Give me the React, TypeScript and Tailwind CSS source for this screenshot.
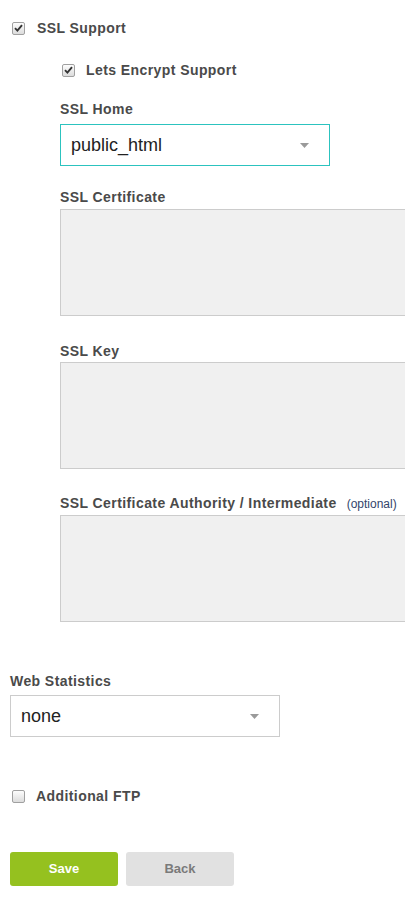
import React from "react";

const Box = ({ checked }: { checked?: boolean }) => (
  <span className="inline-flex h-[13px] w-[13px] shrink-0 items-center justify-center rounded-[2px] border border-[#a0a0a0] bg-gradient-to-b from-[#fdfdfd] to-[#dcdcdc]">
    {checked && (
      <svg width="9" height="8" viewBox="0 0 9 8">
        <path d="M1 4.2 L3.4 6.6 L8 1.2" fill="none" stroke="#333" strokeWidth="1.9" />
      </svg>
    )}
  </span>
);

const Caret = () => (
  <svg width="9" height="5" viewBox="0 0 9 5" className="shrink-0">
    <path d="M0 0 H9 L4.5 5 Z" fill="#9a9a9a" />
  </svg>
);

const Label = ({ children, className = "" }: { children: React.ReactNode; className?: string }) => (
  <div className={`h-[20px] text-[14px] font-bold leading-[20px] tracking-[0.03em] text-[#4a4a4a] ${className}`}>
    {children}
  </div>
);

const Area = () => <div className="h-[107px] w-[360px] shrink-0 border border-[#cccccc] bg-[#f0f0f0]" />;

const App: React.FC = () => {
  return (
    <div className="h-[911px] w-[405px] overflow-hidden bg-white font-['Liberation_Sans',Arial,sans-serif]">
      <div className="flex h-[20px] items-center gap-[12px] pl-[12px] mt-[18px]">
        <Box checked />
        <span className="text-[14px] font-bold tracking-[0.03em] text-[#4a4a4a]">SSL Support</span>
      </div>

      <div className="pl-[60px]">
        <div className="mt-[22px] flex h-[20px] items-center gap-[11px] pl-[2px]">
          <Box checked />
          <span className="text-[14px] font-bold tracking-[0.03em] text-[#4a4a4a]">Lets Encrypt Support</span>
        </div>

        <Label className="mt-[19px]">SSL Home</Label>
        <div className="mt-[5px] flex h-[42px] w-[270px] items-center justify-between border border-[#2cc3bf] pl-[10px] pr-[20px]">
          <span className="text-[18px] text-[#222]">public_html</span>
          <Caret />
        </div>

        <Label className="mt-[21px]">SSL Certificate</Label>
        <div className="mt-[2px]">
          <Area />
        </div>

        <Label className="mt-[25px]">SSL Key</Label>
        <div className="mt-[1px]">
          <Area />
        </div>

        <Label className="mt-[24px]">
          SSL Certificate Authority / Intermediate
          <span className="ml-[10px] text-[12px] font-normal tracking-normal text-[#34456b]">(optional)</span>
        </Label>
        <div className="mt-[2px]">
          <Area />
        </div>
      </div>

      <div className="pl-[10px]">
        <Label className="mt-[49px]">Web Statistics</Label>
        <div className="mt-[4px] flex h-[42px] w-[270px] items-center justify-between border border-[#cccccc] pl-[10px] pr-[20px]">
          <span className="text-[18px] text-[#222]">none</span>
          <Caret />
        </div>

        <div className="mt-[49px] flex h-[20px] items-center gap-[11px] pl-[2px]">
          <Box />
          <span className="text-[14px] font-bold tracking-[0.03em] text-[#4a4a4a]">Additional FTP</span>
        </div>

        <div className="mt-[46px] flex gap-[8px]">
          <button className="h-[34px] w-[108px] rounded-[3px] bg-[#95c11f] text-[13px] font-bold text-white">Save</button>
          <button className="h-[34px] w-[108px] rounded-[3px] bg-[#e1e1e1] text-[13px] font-bold text-[#7a7a7a]">Back</button>
        </div>
      </div>
    </div>
  );
};

export default App;
